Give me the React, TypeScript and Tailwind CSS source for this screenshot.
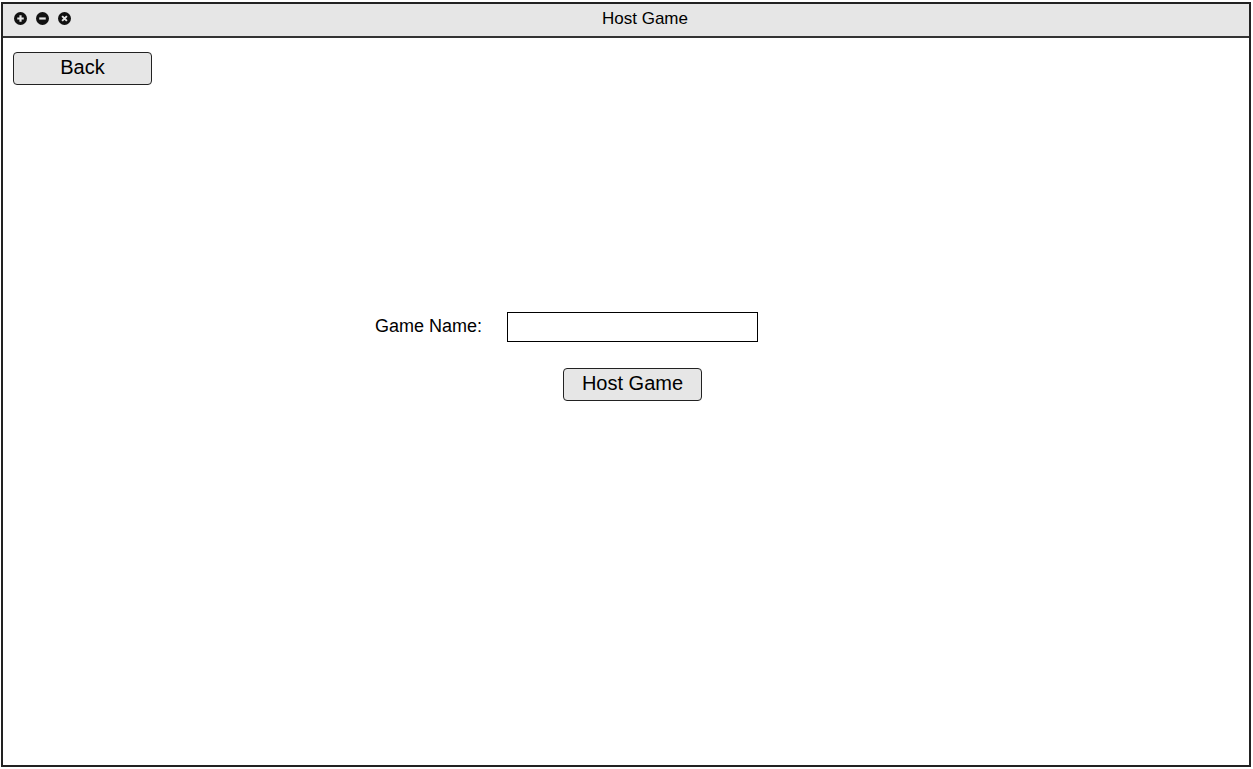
export default function App() {
  return (
    <div className="h-[769px] w-[1253px] bg-white pt-[2px] pl-[1px] font-['Liberation_Sans',Arial,sans-serif] text-black">
      <div className="flex h-[765px] w-[1250px] flex-col border-2 border-[#222] bg-white">
        {/* Title bar */}
        <div className="relative flex h-[34px] shrink-0 items-start border-b-2 border-[#333] bg-[#e6e6e6]">
          <div className="flex items-center gap-[9px] pl-[11px] pt-[8px]">
            <svg width="13" height="13" viewBox="0 0 12 12">
              <circle cx="6" cy="6" r="6" fill="#111" />
              <path d="M6 3v6M3 6h6" stroke="#e6e6e6" strokeWidth="2" />
            </svg>
            <svg width="13" height="13" viewBox="0 0 12 12">
              <circle cx="6" cy="6" r="6" fill="#111" />
              <path d="M3 6h6" stroke="#e6e6e6" strokeWidth="2" />
            </svg>
            <svg width="13" height="13" viewBox="0 0 12 12">
              <circle cx="6" cy="6" r="6" fill="#111" />
              <path d="M3.8 3.8l4.4 4.4M8.2 3.8l-4.4 4.4" stroke="#e6e6e6" strokeWidth="1.8" />
            </svg>
          </div>
          <span className="absolute left-[642px] top-[5px] -translate-x-1/2 text-[17px] leading-5">Host Game</span>
        </div>

        {/* Content */}
        <div className="flex flex-1 flex-col pl-[10px] pt-[14px]">
          <button className="h-[33px] w-[139px] rounded-[4px] border border-[#222] bg-[#e6e6e6] pb-[4px] text-[20px] leading-none">
            Back
          </button>

          <div className="mt-[227px] flex items-center pl-[362px]">
            <span className="pb-[1px] text-[18px]">Game Name:</span>
            <input
              type="text"
              className="ml-[25px] h-[30px] w-[251px] border border-black bg-white outline-none"
            />
          </div>

          <div className="mt-[26px] pl-[550px]">
            <button className="h-[33px] w-[139px] rounded-[4px] border border-[#222] bg-[#e6e6e6] pb-[4px] text-[20px] leading-none">
              Host Game
            </button>
          </div>
        </div>
      </div>
    </div>
  );
}
